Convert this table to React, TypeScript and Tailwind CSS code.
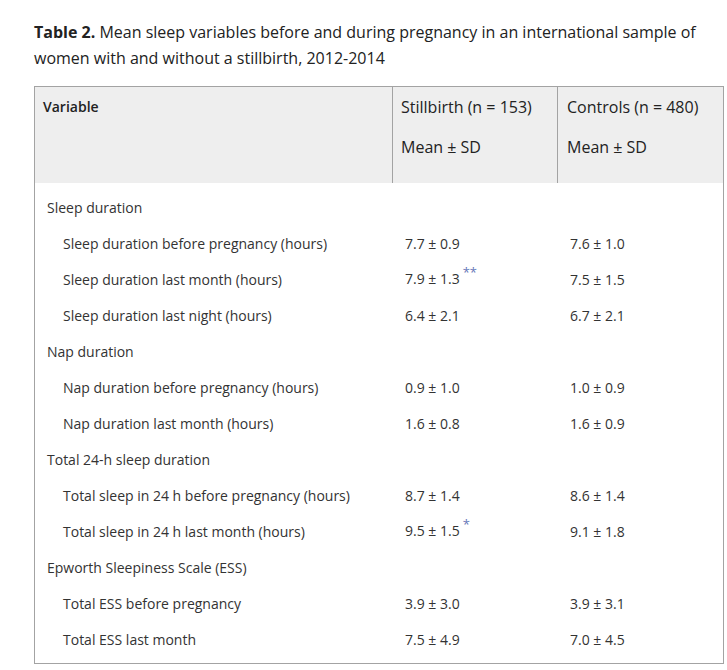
import React from 'react';

type Row = { label: string; group?: boolean; a?: string; b?: string; mark?: string };

const rows: Row[] = [
  { label: 'Sleep duration', group: true },
  { label: 'Sleep duration before pregnancy (hours)', a: '7.7 ± 0.9', b: '7.6 ± 1.0' },
  { label: 'Sleep duration last month (hours)', a: '7.9 ± 1.3', b: '7.5 ± 1.5', mark: '**' },
  { label: 'Sleep duration last night (hours)', a: '6.4 ± 2.1', b: '6.7 ± 2.1' },
  { label: 'Nap duration', group: true },
  { label: 'Nap duration before pregnancy (hours)', a: '0.9 ± 1.0', b: '1.0 ± 0.9' },
  { label: 'Nap duration last month (hours)', a: '1.6 ± 0.8', b: '1.6 ± 0.9' },
  { label: 'Total 24-h sleep duration', group: true },
  { label: 'Total sleep in 24 h before pregnancy (hours)', a: '8.7 ± 1.4', b: '8.6 ± 1.4' },
  { label: 'Total sleep in 24 h last month (hours)', a: '9.5 ± 1.5', b: '9.1 ± 1.8', mark: '*' },
  { label: 'Epworth Sleepiness Scale (ESS)', group: true },
  { label: 'Total ESS before pregnancy', a: '3.9 ± 3.0', b: '3.9 ± 3.1' },
  { label: 'Total ESS last month', a: '7.5 ± 4.9', b: '7.0 ± 4.5' },
];

export default function App() {
  return (
    <div className="min-h-screen bg-white text-[#222] font-['Open_Sans',sans-serif]">
      <div className="pt-[19px] pl-[34px] pr-[20px]">
        <p className="text-[16px] leading-[26px]">
          <span className="font-bold">Table 2.</span> Mean sleep variables before and during pregnancy in an international sample of women with and without a stillbirth, 2012-2014
        </p>
      </div>

      <div className="mt-[15px] ml-[34px] w-[690px] border border-[#a3a3a3]">
        <div className="grid grid-cols-[358px_165px_165px] bg-[#eeeeee]">
          <div className="border-r border-[#a3a3a3] px-2 pt-2 pb-2">
            <p className="text-[14px] leading-[24px] font-semibold">Variable</p>
          </div>
          <div className="border-r border-[#a3a3a3] px-2 pt-2 pb-2">
            <p className="text-[16px] leading-[24px] mb-4">Stillbirth (n = 153)</p>
            <p className="text-[16px] leading-[24px] mb-4">Mean ± SD</p>
          </div>
          <div className="px-[9px] pt-2 pb-2">
            <p className="text-[16px] leading-[24px] mb-4">Controls (n = 480)</p>
            <p className="text-[16px] leading-[24px] mb-4">Mean ± SD</p>
          </div>
        </div>

        <div className="pt-[6px] pb-[6px] text-[14px] text-[#333]">
          {rows.map((r) => (
            <div key={r.label} className="grid grid-cols-[358px_165px_165px] h-9 items-center">
              <div className={r.group ? 'pl-3' : 'pl-7'}>{r.label}</div>
              <div className="pl-3">
                {r.a}
                {r.mark && (
                  <span className="relative -top-[7px] ml-[3px] text-[13px] text-[#6577b8]">{r.mark}</span>
                )}
              </div>
              <div className="pl-3">{r.b}</div>
            </div>
          ))}
        </div>
      </div>
    </div>
  );
}
